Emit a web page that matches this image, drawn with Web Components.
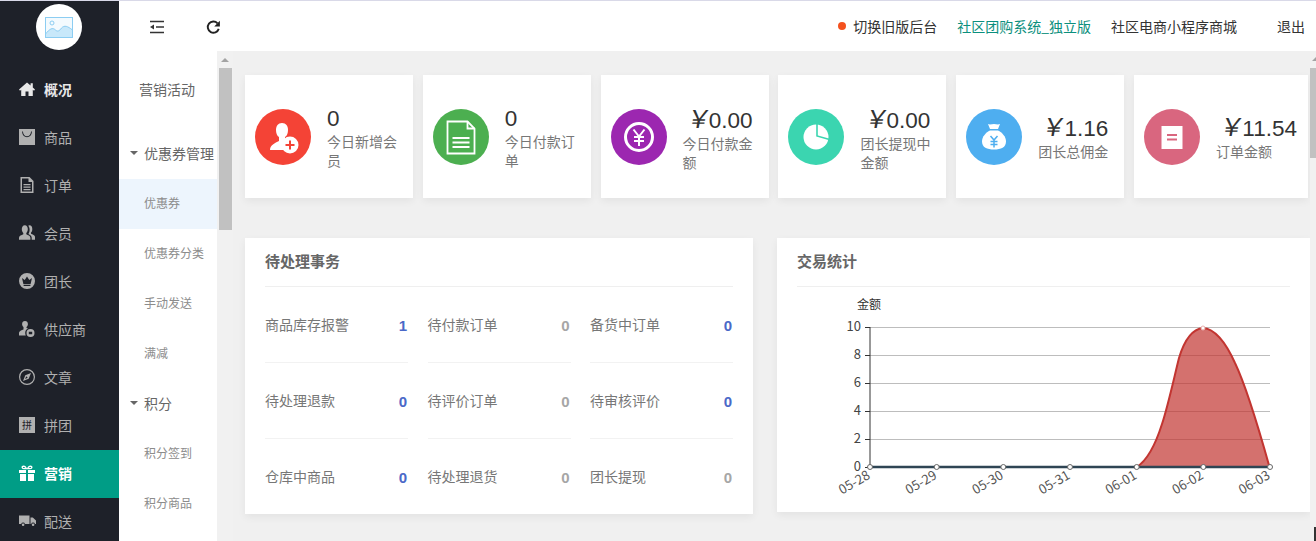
<!DOCTYPE html>
<html lang="zh">
<head>
<meta charset="utf-8">
<title>概况</title>
<style>
	html, body {
		margin: 0;
		height: 100%;
		overflow: hidden;
	}

	body {
		font-family: "Noto Sans CJK SC", "Liberation Sans", sans-serif;
		font-size: 14px;
		background: #f0f0f0;
	}
</style>
</head>
<body>
<app-shell>
	<side-nav slot="nav">
		<nav-item icon="home" strong>概况</nav-item>
		<nav-item icon="bag">商品</nav-item>
		<nav-item icon="doc">订单</nav-item>
		<nav-item icon="users">会员</nav-item>
		<nav-item icon="crown">团长</nav-item>
		<nav-item icon="supplier">供应商</nav-item>
		<nav-item icon="compass">文章</nav-item>
		<nav-item icon="pin">拼团</nav-item>
		<nav-item icon="gift" active>营销</nav-item>
		<nav-item icon="truck">配送</nav-item>
	</side-nav>
	<top-bar slot="top"></top-bar>
	<sub-menu slot="sub">
		<div class="title">营销活动</div>
		<div class="group">优惠券管理</div>
		<div class="entry on">优惠券</div>
		<div class="entry">优惠券分类</div>
		<div class="entry">手动发送</div>
		<div class="entry">满减</div>
		<div class="group">积分</div>
		<div class="entry">积分签到</div>
		<div class="entry">积分商品</div>
	</sub-menu>
	<stat-row slot="content">
		<stat-card icon="member" color="#f44336" value="0" label="今日新增会员"></stat-card>
		<stat-card icon="order" color="#4caf50" value="0" label="今日付款订单"></stat-card>
		<stat-card icon="yen" color="#9c27b0" value="0.00" label="今日付款金额" money></stat-card>
		<stat-card icon="pie" color="#3bd5b0" value="0.00" label="团长提现中金额" money></stat-card>
		<stat-card icon="sack" color="#4eaef0" value="1.16" label="团长总佣金" money short></stat-card>
		<stat-card icon="note" color="#d9667f" value="11.54" label="订单金额" money short wide></stat-card>
	</stat-row>
	<panel-row slot="content">
		<info-panel heading="待处理事务" class="todo">
			<todo-grid>
				<todo-item label="商品库存报警" value="1" hot></todo-item>
				<todo-item label="待付款订单" value="0"></todo-item>
				<todo-item label="备货中订单" value="0" hot></todo-item>
				<todo-item label="待处理退款" value="0" hot></todo-item>
				<todo-item label="待评价订单" value="0"></todo-item>
				<todo-item label="待审核评价" value="0" hot></todo-item>
				<todo-item label="仓库中商品" value="0" hot last></todo-item>
				<todo-item label="待处理退货" value="0" last></todo-item>
				<todo-item label="团长提现" value="0" last></todo-item>
			</todo-grid>
		</info-panel>
		<info-panel heading="交易统计" class="trade">
			<trade-chart></trade-chart>
		</info-panel>
	</panel-row>
</app-shell>

<script>
const icons = {
	home: '<path d="M8 1.500 0 8.600l1 1.100 1.200-1v6.300h4.300v-4.400h3v4.400h4.300V8.700l1.200 1 1-1.100-2.200-2V2.200h-2.200v2.400z"/>',
	bag: '<path fill-rule="evenodd" d="M0 0h16v16H0zM3 2.600c.3 3.600 2.200 5.600 5 5.600s4.700-2 5-5.600h-.9C11.800 5.800 10.300 7.300 8 7.300S4.200 5.800 3.900 2.600z"/>',
	doc: '<path fill-rule="evenodd" d="M1.500 0h9L14.500 4v12h-13zM3 1.500v13h10V5H9.500V1.500zM4.500 7h7v1.200h-7zM4.500 9.500h7v1.200h-7zM4.500 12h7v1.200h-7z"/>',
	users: '<path transform="translate(0 -2.200) scale(1 1.170)" d="M5.800 2c2 0 3 1.500 3 3.400 0 1.500-.6 2.700-1.500 3.300v1c1.800.7 4.100 1.400 4.100 3v1.800H0v-1.800c0-1.600 2.500-2.300 4.300-3v-1c-.9-.6-1.500-1.800-1.500-3.300C2.800 3.500 3.800 2 5.800 2zM10.500 2c1.800 0 2.800 1.400 2.800 3.200 0 1.400-.5 2.500-1.300 3.100v1c1.500.6 4 1.200 4 2.700v2.500h-3.300v-1.800c0-1.500-1.600-2.400-3.300-3.200.8-.9 1.200-2.200 1.200-3.500 0-1.500-.5-2.700-1.400-3.500.3-.3.8-.5 1.300-.5z"/>',
	crown: '<path fill-rule="evenodd" d="M8 0a8 8 0 1 1 0 16A8 8 0 0 1 8 0zM3 5l1.400 6h7.200L13 5l-2.700 2L8 3.600 5.700 7zM4.600 11.800v1.200h6.800v-1.200z"/>',
	supplier: '<path fill-rule="evenodd" d="M6 0c1.800 0 2.900 1.300 2.900 3.100 0 1.300-.6 2.500-1.400 3v.9c.5.2 1 .4 1.500.6A4.800 4.800 0 0 0 6.200 12c0 .9.2 1.700.6 2.400H0v-2.600c0-1.800 2.700-2.700 4.500-3.400V6.100c-.8-.5-1.400-1.700-1.400-3C3.100 1.300 4.200 0 6 0zM11.500 8a4 4 0 1 1 0 8 4 4 0 0 1 0-8zM9.800 10.800v2.400h3.400v-2.400z"/>',
	compass: '<path fill-rule="evenodd" d="M8 0a8 8 0 1 1 0 16A8 8 0 0 1 8 0zM8 1.200a6.800 6.800 0 1 0 0 13.600A6.800 6.800 0 0 0 8 1.200zM12 4l-2.300 5.700L4 12l2.300-5.700zM7.300 7.300l-1.200 2.600 2.600-1.200z"/>',
	gift: '<path fill-rule="evenodd" d="M0 5h7v3H0zM9 5h7v3H9zM1 9h6v7H1zM9 9h6v7H9zM4.500.5c1.600 0 2.800 1.300 3.500 3 .7-1.700 1.900-3 3.500-3 1.200 0 2 .7 2 1.800 0 1.200-1 2-2.500 2h-6c-1.500 0-2.500-.8-2.500-2C2.500 1.200 3.300.5 4.500.5zM4.500 2c-.4 0-.6.2-.6.4 0 .4.500.6 1.100.6h1.400C6 2.500 5.300 2 4.500 2zM11.500 2c-.8 0-1.500.5-1.900 1H11c.6 0 1.100-.2 1.100-.6 0-.2-.2-.4-.6-.4z"/>',
	truck: '<path d="M0 2.500h10.500v8.500H6a2 2 0 0 0-3.800 0H0zM11.500 4.500h2.300L17 7.500V11h-1a2 2 0 0 0-3.800 0h-.7zM4.100 10.500a1.300 1.300 0 1 1 0 2.600 1.300 1.300 0 0 1 0-2.600zM14.100 10.500a1.300 1.300 0 1 1 0 2.600 1.300 1.300 0 0 1 0-2.600z"/>'
};

const navTemplate = document.createElement('template');
navTemplate.innerHTML = `
	<style>
		:host {
			display: flex;
			align-items: center;
			height: 48px;
			flex: none;
			box-sizing: border-box;
			padding: 0 0 2px 19px;
			color: #b0b0b0;
		}

		:host([active]) {
			background: #009d86;
			color: #fff;
			font-weight: 700;
		}

		:host([strong]) {
			color: #e8e8e8;
			font-weight: 700;
		}

		#glyph {
			display: flex;
			width: 16px;
			height: 16px;
			margin-right: 9px;
			flex: none;
		}

		svg {
			width: 16px;
			height: 16px;
			overflow: visible;
			fill: currentColor;
		}

		#glyph.pin {
			display: block;
			background: #b0b0b0;
			color: #1e2129;
			font-size: 10px;
			line-height: 16px;
			text-align: center;
			font-weight: 400;
		}
	</style>
	<span id="glyph"></span>
	<slot></slot>
`;

customElements.define('nav-item', class extends HTMLElement {
	constructor() {
		super();
		this
			.attachShadow({ mode: 'open' })
			.appendChild(navTemplate.content.cloneNode(true));
	}

	connectedCallback() {
		const name = this.getAttribute('icon');
		const glyph = this.shadowRoot.querySelector('#glyph');
		if (name === 'pin') {
			glyph.className = 'pin';
			glyph.textContent = '拼';
		} else {
			glyph.innerHTML = `<svg viewBox="0 0 16 16">${icons[name]}</svg>`;
		}
	}
});

customElements.define('side-nav', class extends HTMLElement {
	constructor() {
		super();
		this.attachShadow({ mode: 'open' }).innerHTML = `
			<style>
				:host {
					display: flex;
					flex-direction: column;
					width: 119px;
					height: 100%;
					background: #1e2129;
					overflow: hidden;
				}

				.logo {
					height: 65px;
					flex: none;
					display: flex;
					justify-content: center;
					padding: 3px 1px 0 0;
					box-sizing: border-box;
				}

				.logo > span {
					width: 46px;
					height: 46px;
					border-radius: 50%;
					background: #fff;
					display: flex;
					align-items: center;
					justify-content: center;
				}
			</style>
			<div class="logo"><span>
				<svg width="28" height="21" viewBox="0 0 28 21" fill="none" stroke="#8ccdf2" stroke-width="1">
					<rect x=".5" y=".5" width="27" height="20" fill="#f3fafe"/>
					<circle cx="7" cy="6" r="2"/>
					<path d="M.5 17c4-5 7-7 10-4 2 2 4 1 6-2 3-3 6-2 11 2v7.500H.5z" fill="#c8e8fa"/>
				</svg>
			</span></div>
			<slot></slot>
		`;
	}
});

customElements.define('top-bar', class extends HTMLElement {
	constructor() {
		super();
		this.attachShadow({ mode: 'open' }).innerHTML = `
			<style>
				:host {
					display: flex;
					align-items: center;
					height: 50px;
					flex: none;
					background: #fff;
					font-size: 14px;
					color: #333;
				}

				.tools {
					display: flex;
					align-items: center;
					gap: 41px;
					padding: 2px 0 0 30px;
				}

				svg {
					display: block;
				}

				.links {
					margin-left: auto;
					display: flex;
					align-items: center;
				}

				.dot {
					width: 8px;
					height: 8px;
					border-radius: 50%;
					background: #f4511e;
					margin-right: 7px;
				}

				.green {
					color: #0b8f7d;
					margin: 0 20px;
				}

				.out {
					margin: 0 11px 0 40px;
				}
			</style>
			<div class="tools">
				<svg width="16" height="14" viewBox="0 0 16 14" fill="none" stroke="#333" stroke-width="1.400">
					<path d="M1 1.500h14M7 7h8M1 12.500h14"/>
					<path d="M1 7l4-2.500v5z" fill="#333" stroke="none"/>
				</svg>
				<svg width="15" height="15" viewBox="0 0 16 16" fill="none" stroke="#222" stroke-width="2">
					<path d="M13.600 9.500A6 6 0 1 1 12.300 3.500"/>
					<path d="M14.800 .8v6H8.800z" fill="#222" stroke="none"/>
				</svg>
			</div>
			<div class="links">
				<span class="dot"></span>
				<span>切换旧版后台</span>
				<span class="green">社区团购系统_独立版</span>
				<span>社区电商小程序商城</span>
				<span class="out">退出</span>
			</div>
		`;
	}
});

customElements.define('sub-menu', class extends HTMLElement {
	constructor() {
		super();
		this.attachShadow({ mode: 'open' }).innerHTML = `
			<style>
				:host {
					display: flex;
					flex: none;
					height: 100%;
					overflow: hidden;
				}

				.list {
					width: 98px;
					background: #fff;
					padding-top: 14px;
					box-sizing: border-box;
				}

				.bar {
					width: 16px;
					background: #f1f1f1;
					display: flex;
					flex-direction: column;
					align-items: center;
				}

				.arrow {
					width: 0;
					height: 0;
					margin: 7px 0 6px;
					border: 4px solid transparent;
					border-top: 0;
					border-bottom: 4px solid #a3a3a3;
				}

				.thumb {
					width: 13px;
					height: 162px;
					background: #c1c1c1;
				}

				::slotted(.title) {
					height: 50px;
					line-height: 48px;
					margin-bottom: 14px;
					padding-left: 20px;
					font-size: 14px;
					color: #666;
				}

				::slotted(.group) {
					height: 50px;
					line-height: 48px;
					padding-left: 25px;
					font-size: 14px;
					color: #666;
					white-space: nowrap;
					position: relative;
				}

				::slotted(.group)::before {
					content: "";
					position: absolute;
					left: 11px;
					top: 22px;
					border: 4px solid transparent;
					border-bottom: 0;
					border-top: 4px solid #666;
				}

				::slotted(.entry) {
					height: 50px;
					line-height: 48px;
					padding-left: 25px;
					font-size: 12px;
					color: #8c8c8c;
					white-space: nowrap;
				}

				::slotted(.on) {
					background: #edf5fd;
				}
			</style>
			<div class="list"><slot></slot></div>
			<div class="bar"><span class="arrow"></span><span class="thumb"></span></div>
		`;
	}
});

const statIcons = {
	member: '<path d="M27 14c4 0 6 3 6 7 0 3-1 6-3 7v3c1 .6 2 1 3.500 1.500A9 9 0 0 0 31 41H15c0-5 5-7 9-9v-4c-2-1-3-4-3-7 0-4 2-7 6-7z" fill="#fff"/><circle cx="35" cy="36" r="8.500" fill="#fff"/><path d="M30.500 36h9M35 31.500v9" stroke="#f44336" stroke-width="2"/>',
	order: '<path d="M14.500 12.500h20l7 7v25h-27z" fill="none" stroke="#fff" stroke-width="1.800"/><path d="M34.500 12.500v7h7" fill="none" stroke="#fff" stroke-width="1.800"/><path d="M19.500 29h17M19.500 33.500h17M19.500 38h17" stroke="#fff" stroke-width="2"/>',
	yen: '<circle cx="28" cy="28" r="13.500" fill="none" stroke="#fff" stroke-width="3"/><path d="M22.500 20.500 28 27.500l5.500-7M23 28h10M23 32h10M28 27.500V37" fill="none" stroke="#fff" stroke-width="2"/>',
	pie: '<circle cx="28" cy="28" r="12.500" fill="#fff"/><path d="M29 14.500V27l12.500 3.500" fill="none" stroke="#3bd5b0" stroke-width="1.600"/><path d="M31 19.500v5.500l6 1.700c-.5-3-3-6-6-7.200z" fill="#fff"/>',
	sack: '<path d="M22 15c2 1 4 0 6 0s4 1 6 0l-2 5h-8z" fill="#fff"/><path d="M24 21.500h8c4 2 8 6 8 11 0 6-5 8-12 8s-12-2-12-8c0-5 4-9 8-11z" fill="#fff"/><path d="M24.500 27l3.500 4 3.500-4M24.500 32.500h7M24.500 35.500h7M28 31v7.500" fill="none" stroke="#4eaef0" stroke-width="1.500"/>',
	note: '<path d="M17.500 17h21v23h-21z" fill="#fff"/><path d="M23 26h10M23 30.500h10" stroke="#d9667f" stroke-width="2"/>'
};

const statTemplate = document.createElement('template');
statTemplate.innerHTML = `
	<style>
		:host {
			display: flex;
			align-items: center;
			width: 168px;
			height: 123px;
			flex: none;
			box-sizing: border-box;
			padding-left: 10px;
			background: #fff;
			box-shadow: 0 3px 8px rgba(0, 0, 0, .06);
		}

		:host([wide]) {
			width: 174px;
		}

		svg {
			width: 56px;
			height: 56px;
			flex: none;
			margin-right: 16px;
		}

		.text {
			width: 70px;
			flex: none;
			padding-top: 2px;
		}

		:host([money]) .text {
			padding-top: 3px;
		}

		:host([short]) .text {
			padding-top: 0;
			margin-bottom: 1px;
		}

		:host([wide]) .text {
			width: 81px;
		}

		.value {
			font-family: "Liberation Sans", sans-serif;
			font-size: 22.5px;
			line-height: 26px;
			color: #333;
			white-space: nowrap;
		}

		:host([money]) .value {
			text-align: right;
		}

		.yen {
			display: inline-block;
			font-family: "Noto Sans CJK SC", sans-serif;
			font-size: 25px;
			line-height: 26px;
			transform: skewX(-10deg);
			margin: 0 -3px 0 -6px;
		}

		.label {
			font-size: 14px;
			line-height: 19px;
			color: #777;
		}
	</style>
	<svg viewBox="0 0 56 56"></svg>
	<div class="text">
		<div class="value"></div>
		<div class="label"></div>
	</div>
`;

customElements.define('stat-card', class extends HTMLElement {
	constructor() {
		super();
		this
			.attachShadow({ mode: 'open' })
			.appendChild(statTemplate.content.cloneNode(true));
	}

	connectedCallback() {
		const root = this.shadowRoot;
		const value = this.getAttribute('value');
		root.querySelector('svg').innerHTML = `<circle cx="28" cy="28" r="28" fill="${this.getAttribute('color')}"/>${statIcons[this.getAttribute('icon')]}`;
		root.querySelector('.value').innerHTML = this.hasAttribute('money') ? `<span class="yen">￥</span>${value}` : value;
		root.querySelector('.label').textContent = this.getAttribute('label');
	}
});

customElements.define('stat-row', class extends HTMLElement {
	constructor() {
		super();
		this.attachShadow({ mode: 'open' }).innerHTML = `
			<style>
				:host {
					display: flex;
					gap: 9.8px;
				}
			</style>
			<slot></slot>
		`;
	}
});

customElements.define('panel-row', class extends HTMLElement {
	constructor() {
		super();
		this.attachShadow({ mode: 'open' }).innerHTML = `
			<style>
				:host {
					display: flex;
					gap: 24px;
					margin-top: 40px;
					align-items: flex-start;
				}

				::slotted(.todo) {
					width: 508px;
					height: 276px;
				}

				::slotted(.trade) {
					width: 533px;
					height: 274px;
				}
			</style>
			<slot></slot>
		`;
	}
});

customElements.define('info-panel', class extends HTMLElement {
	constructor() {
		super();
		this.attachShadow({ mode: 'open' }).innerHTML = `
			<style>
				:host {
					display: block;
					flex: none;
					background: #fff;
					padding: 0 20px;
					box-sizing: border-box;
					box-shadow: 0 3px 8px rgba(0, 0, 0, .06);
				}

				.head {
					height: 48px;
					line-height: 45px;
					border-bottom: 1px solid #efefef;
					font-size: 15px;
					font-weight: 700;
					color: #666;
				}
			</style>
			<div class="head"></div>
			<slot></slot>
		`;
	}

	connectedCallback() {
		this.shadowRoot.querySelector('.head').textContent = this.getAttribute('heading');
	}
});

customElements.define('todo-grid', class extends HTMLElement {
	constructor() {
		super();
		this.attachShadow({ mode: 'open' }).innerHTML = `
			<style>
				:host {
					display: grid;
					grid-template-columns: repeat(3, 1fr);
					column-gap: 19.5px;
				}
			</style>
			<slot></slot>
		`;
	}
});

customElements.define('todo-item', class extends HTMLElement {
	constructor() {
		super();
		this.attachShadow({ mode: 'open' }).innerHTML = `
			<style>
				:host {
					display: flex;
					align-items: center;
					justify-content: space-between;
					height: 76px;
					box-sizing: border-box;
					border-bottom: 1px solid #f2f2f2;
					font-size: 14px;
					color: #777;
				}

				:host([last]) {
					border-bottom-color: transparent;
				}

				#label {
					padding-bottom: 2px;
				}

				b {
					font-family: "Liberation Sans", sans-serif;
					font-size: 15px;
					color: #a6a6a6;
					margin-right: 1px;
					padding-top: 1px;
				}

				:host([hot]) b {
					color: #4a68c8;
				}
			</style>
			<span id="label"></span>
			<b id="value"></b>
		`;
	}

	connectedCallback() {
		this.shadowRoot.querySelector('#label').textContent = this.getAttribute('label');
		this.shadowRoot.querySelector('#value').textContent = this.getAttribute('value');
	}
});

customElements.define('trade-chart', class extends HTMLElement {
	constructor() {
		super();
		const days = ['05-28', '05-29', '05-30', '05-31', '06-01', '06-02', '06-03'];
		const x = i => 72 + i * 66.67;
		const grid = [10, 8, 6, 4, 2, 0].map((v, i) => {
			const y = 39 + i * 28;
			return `
				${v ? `<path d="M72 ${y + .5}H472" stroke="#bdbdbd"/>` : ''}
				<path d="M67 ${y + .5}h5" stroke="#333"/>
				<text x="63" y="${y + 4}" text-anchor="end" fill="#444" font-size="13">${v}</text>`;
		}).join('');
		const labels = days.map((d, i) => `
			<text transform="translate(${x(i) + 1} 190) rotate(-30)" text-anchor="end" fill="#555" font-size="13">${d}</text>`).join('');
		const dots = days.map((d, i) => `
			<circle cx="${x(i)}" cy="179" r="2.500" fill="#fff" stroke="#666"/>`).join('');
		this.attachShadow({ mode: 'open' }).innerHTML = `
			<style>
				:host {
					display: block;
					margin: 0 -20px;
				}

				svg {
					display: block;
					font-family: "Noto Sans CJK SC", "Liberation Sans", sans-serif;
				}
			</style>
			<svg width="533" height="225" viewBox="-21 -1 533 225">
				<text x="59" y="20.500" fill="#333" font-size="12">金额</text>
				${grid}
				<path d="M72 39V180" stroke="#333" fill="none"/>
				<path d="M338.700 179C350 172 358 155 364 136 370 118 376 90 381 70 387 50 395 41 405 40 418 41 428 55 437 75 449 100 462 145 471.500 179Z" fill="#c23531" fill-opacity=".7" stroke="#c23531" stroke-width="2"/>
				<path d="M72 179H472" stroke="#2f4554" stroke-width="2.500"/>
				<circle cx="405" cy="40" r="2" fill="#fff" stroke="#e8b0ae"/>
				${dots}
				${labels}
			</svg>
		`;
	}
});

customElements.define('app-shell', class extends HTMLElement {
	constructor() {
		super();
		this.attachShadow({ mode: 'open' }).innerHTML = `
			<style>
				:host {
					display: flex;
					height: 541px;
					width: 1316px;
					overflow: hidden;
					border-top: 1px solid #d9d9e8;
					box-sizing: border-box;
				}

				.main {
					flex: 1;
					min-width: 0;
					display: flex;
					flex-direction: column;
				}

				.body {
					flex: 1;
					min-height: 0;
					display: flex;
				}

				.content {
					flex: 1;
					min-width: 0;
					padding: 24px 0 0 12px;
					background: #f0f0f0;
				}

				.edge {
					width: 6px;
					flex: none;
					background: #f1f1f1;
					display: flex;
					flex-direction: column;
				}

				.tick {
					margin: 6px 0 0 2px;
					width: 0;
					height: 0;
					border: 4px solid transparent;
					border-top: 0;
					border-bottom: 4px solid #a3a3a3;
				}

				.thumb {
					margin-top: 7px;
					height: 90px;
					background: #c1c1c1;
				}

				.cursor {
					margin: auto 0 0 auto;
					width: 2px;
					height: 14px;
					background: #333;
				}
			</style>
			<slot name="nav"></slot>
			<div class="main">
				<slot name="top"></slot>
				<div class="body">
					<slot name="sub"></slot>
					<div class="content"><slot name="content"></slot></div>
					<div class="edge"><span class="tick"></span><span class="thumb"></span><span class="cursor"></span></div>
				</div>
			</div>
		`;
	}
});
</script>
</body>
</html>
